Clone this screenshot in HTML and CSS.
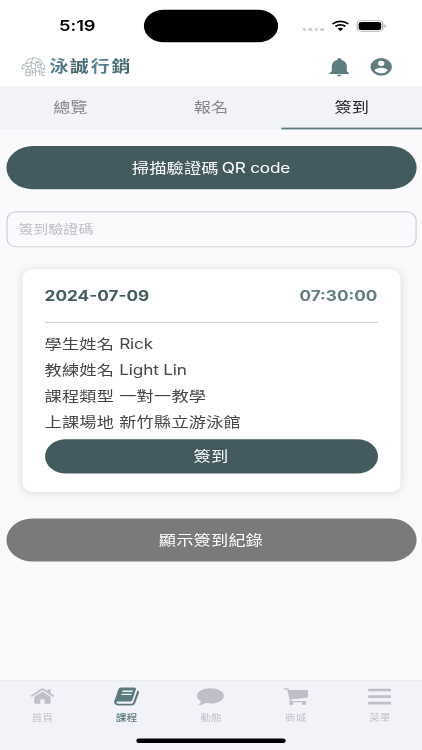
FILE: index.html
```html
<!DOCTYPE html>
<html lang="zh-Hant">
<head>
    <meta charset="UTF-8">
    <meta name="viewport" content="width=device-width, initial-scale=1.0">
    <title>泳誠行銷</title>
    <link rel="stylesheet" href="styles.css">
</head>
<body>
    <div class="phone">
        <div class="status-bar">
            <span class="clock">5:19</span>
            <div class="island"></div>
            <div class="status-icons">
                <div class="dots"><i></i><i></i><i></i><i></i></div>
                <svg class="wifi" viewBox="0 0 17 12">
                    <path d="M8.500 2.500c2.400 0 4.600.9 6.200 2.500l1.300-1.300a10.600 10.600 0 0 0-15 0l1.300 1.300A8.900 8.900 0 0 1 8.500 2.500z"/>
                    <path d="M8.500 6.200c1.400 0 2.700.5 3.700 1.400l1.300-1.300a7.200 7.200 0 0 0-10 0l1.300 1.300c1-.9 2.300-1.400 3.700-1.400z"/>
                    <path d="M8.500 12l2.400-2.500a3.400 3.400 0 0 0-4.800 0z"/>
                </svg>
                <svg class="battery" viewBox="0 0 28 13">
                    <rect x=".5" y=".5" width="24" height="12" rx="3.800" fill="none" stroke="#999"/>
                    <rect x="2" y="2" width="21" height="9" rx="2.500"/>
                    <path d="M26 4.500v4c.8-.3 1.300-1.100 1.300-2s-.5-1.700-1.300-2z" fill="#999"/>
                </svg>
            </div>
        </div>

        <header class="header">
            <div class="brand">
                <svg class="logo" viewBox="0 0 24 22">
                    <path d="M4 13H1.500V9L5 7.500 6.500 3.500 11 1h4l4 2.500 1.500 3.500 2.500 2.500-1 3.500h-3M5 7.500l5-1.500 2-5M6 11l4-1V6l4 2 4-4M3 10h4v3M10 10v3h4V8M14 5l5 2v5h-3v-3l4-1"/>
                    <path d="M5 14v7M5 14h4v3H5M9 17v4H5M11 14v7M11 17h3M14 21V14l2 3 2-3v7M21 14h2M20 14v7h3M20 17h3"/>
                </svg>
                <span class="brand-name">泳誠行銷</span>
            </div>
            <div class="header-icons">
                <svg viewBox="0 0 24 24"><path d="M21 19v1H3v-1l2-2v-6c0-3.100 2.030-5.830 5-6.710V4a2 2 0 0 1 4 0v.290c2.970.880 5 3.610 5 6.710v6l2 2m-7 2a2 2 0 0 1-4 0"/></svg>
                <svg viewBox="0 0 24 24"><path d="M12 19.200c-2.500 0-4.710-1.280-6-3.200.03-2 4-3.100 6-3.100s5.970 1.100 6 3.100a7.230 7.230 0 0 1-6 3.200M12 5a3 3 0 1 1 0 6 3 3 0 0 1 0-6m0-3a10 10 0 1 0 0 20 10 10 0 0 0 0-20z"/></svg>
            </div>
        </header>

        <nav class="tabs">
            <a class="tab">總覽</a>
            <a class="tab">報名</a>
            <a class="tab active">簽到</a>
        </nav>

        <main class="content">
            <button class="btn btn-scan">掃描驗證碼 <span class="latin">QR code</span></button>
            <input class="code-input" type="text" placeholder="簽到驗證碼">

            <section class="card">
                <div class="card-head">
                    <span class="date">2024-07-09</span>
                    <span class="time">07:30:00</span>
                </div>
                <p>學生姓名 <span class="latin">Rick</span></p>
                <p>教練姓名 <span class="latin">Light Lin</span></p>
                <p>課程類型 一對一教學</p>
                <p>上課場地 新竹縣立游泳館</p>
                <button class="btn btn-small">簽到</button>
            </section>

            <button class="btn btn-gray">顯示簽到紀錄</button>
        </main>

        <footer class="bottom-nav">
            <a class="nav-item">
                <svg viewBox="0 0 24 24"><path d="M12 6.300l-8 6.600V20c0 .5.300.8.800.8H10v-5.300h4v5.300h5.200c.5 0 .8-.3.800-.8v-7.100z"/><path d="M23.500 11.500L20 8.600V3.800h-3v2.300l-3.600-3a2.200 2.200 0 0 0-2.800 0L.5 11.500l1.200 1.500L12 4.600 22.300 13z"/></svg>
                <span>首頁</span>
            </a>
            <a class="nav-item active">
                <svg class="book" viewBox="0 0 24 24"><path fill-rule="evenodd" d="M7 2h12c1.300 0 2 .9 1.600 2.200L17.200 16.500c-.3 1-1.100 1.600-2.200 1.600H3.800c-1.200 0-1.500.6-1.300 1.300.2.7.9 1 1.700 1h11.900c1 0 1.600-.4 1.900-1.400L22 5.600c1.300.5 1.800 1.400 1.500 2.500l-3.700 12c-.4 1.400-1.700 2.300-3.300 2.300H4c-2.300 0-3.900-1.700-3.700-4L4.200 4.300C4.600 2.900 5.600 2 7 2zm1.300 3.600l-.5 1.500h9.500l.5-1.500zm-1 3.500l-.5 1.500h9.500l.5-1.500z"/></svg>
                <span>課程</span>
            </a>
            <a class="nav-item">
                <svg class="chat" viewBox="0 0 26 24"><path d="M13 3C6 3 .5 6.800.5 11.600c0 2.400 1.400 4.500 3.600 6-.2 1.700-1 3.200-2.300 4.400 2.700 0 5-.8 6.800-2.300 1.400.4 2.900.5 4.400.5 7 0 12.500-3.800 12.500-8.600S20 3 13 3z"/></svg>
                <span>動態</span>
            </a>
            <a class="nav-item">
                <svg viewBox="0 0 24 24"><path d="M0 2.500h4.300c.4 0 .7.300.8.700L5.300 4.500H24v9L7.200 16l.2 1.600h14.800v1.500H6c-.3-1-.3-1.800 0-2.600L3.600 4.100H0z"/><circle cx="7.700" cy="20.500" r="2"/><circle cx="20" cy="20.500" r="2"/></svg>
                <span>商城</span>
            </a>
            <a class="nav-item">
                <svg viewBox="0 0 24 24"><path d="M1.500 3h21q.6 0 .6.600v2q0 .6-.6.600h-21q-.6 0-.6-.6v-2q0-.6.6-.6zM1.500 10.800h21q.6 0 .6.600v2q0 .6-.6.600h-21q-.6 0-.6-.6v-2q0-.6.6-.6zM1.500 18.600h21q.6 0 .6.600v2q0 .6-.6.600h-21q-.6 0-.6-.6v-2q0-.6.6-.6z"/></svg>
                <span>菜單</span>
            </a>
        </footer>
        <div class="home-indicator"></div>
    </div>
</body>
</html>
```
FILE: styles.css
```css
* {
    box-sizing: border-box;
}

html {
    height: 750px;
    overflow: hidden;
}

body {
    margin: 0;
    width: 422px;
    height: 750px;
    overflow: hidden;
    background: #f2f3f8;
    font-family: Inter, 'Noto Sans CJK TC', sans-serif;
}

/* 393x852 device screen fitted to the window */
.phone {
    position: relative;
    display: flex;
    flex-direction: column;
    width: 393px;
    height: 852px;
    margin-bottom: -102px;
    background: #fafafd;
    transform: scale(1.0738, 0.8802);
    transform-origin: 0 0;
}

.status-bar {
    display: flex;
    align-items: center;
    height: 59px;
    background: #fff;
}

.clock {
    width: 134px;
    padding: 0 0 1px 55px;
    font-size: 17px;
    font-weight: 600;
    letter-spacing: -0.1px;
}

.island {
    width: 125px;
    height: 37px;
    border-radius: 19px;
    background: #000;
}

.status-icons {
    display: flex;
    align-items: center;
    padding: 0 0 1px 22.5px;
}

.dots {
    display: flex;
    gap: 2px;
    margin: 9px 6px 0 0;
}

.dots i {
    width: 3.5px;
    height: 3.5px;
    border-radius: 50%;
    background: #c8c8c8;
}

.wifi {
    width: 18px;
    height: 14px;
    margin-right: 6.5px;
}

.battery {
    width: 28px;
    height: 13px;
}

.header {
    display: flex;
    justify-content: space-between;
    align-items: center;
    height: 39px;
    padding: 0 26px 5px 19px;
    background: #fff;
}

.brand {
    display: flex;
    align-items: center;
}

.logo {
    width: 24px;
    height: 22px;
    fill: none;
    stroke: #8b9aa0;
    stroke-width: 0.7;
}

.brand-name {
    margin-left: 3px;
    font-size: 17.5px;
    font-weight: 700;
    line-height: 24px;
    letter-spacing: 1.8px;
    color: transparent;
    background: linear-gradient(90deg, #558b9b, #3f6068 35%, #578896 55%, #44626b);
    -webkit-background-clip: text;
    background-clip: text;
}

.header-icons {
    display: flex;
    gap: 15px;
}

.header-icons svg {
    width: 24px;
    height: 24px;
    fill: #607d80;
}

.tabs {
    display: flex;
    height: 48.5px;
    background: #f2f3f8;
}

.tab {
    flex: 1;
    line-height: 46px;
    font-size: 16px;
    text-align: center;
    color: #87878a;
}

.tab.active {
    color: #1c1c1e;
    border-bottom: 2px solid #5b7a7d;
}

.content {
    flex: 1;
    display: flex;
    flex-direction: column;
    padding: 19.5px 5.5px 0;
}

.btn {
    flex: none;
    height: 49px;
    padding: 0 0 2px;
    border: none;
    border-radius: 25px;
    background: #435b5e;
    color: #fff;
    font-family: inherit;
    font-size: 16px;
    letter-spacing: 0.2px;
}

.btn-scan {
    word-spacing: -2px;
}

.latin {
    letter-spacing: -0.15px;
    word-spacing: 0;
}

.code-input {
    height: 41px;
    margin: 25px 0 24.5px;
    padding: 0 10.5px 1px;
    border: 1px solid #c7c7cb;
    border-radius: 10px;
    background: #fafafd;
    font-family: inherit;
    font-size: 14px;
}

.code-input::placeholder {
    color: #bcbcc1;
}

.card {
    height: 253px;
    margin: 0 15px;
    padding: 15px 21px 0;
    border-radius: 10px;
    background: #fff;
    box-shadow: 0 1px 10px rgba(0, 0, 0, 0.13);
}

.card-head {
    display: flex;
    justify-content: space-between;
    height: 46px;
    margin-bottom: 10px;
    border-bottom: 1.5px solid #c9c9cb;
    font-size: 16px;
    font-weight: 700;
    line-height: 31px;
}

.date {
    color: #435b5e;
}

.time {
    color: #647d80;
}

.card p {
    margin: 0;
    height: 29.5px;
    line-height: 29.5px;
    font-size: 16px;
    letter-spacing: 0.2px;
    color: #454545;
}

.btn-small {
    width: 100%;
    height: 39.5px;
    margin-top: 4px;
}

.btn-gray {
    margin-top: 30px;
    background: #7b7979;
}

.bottom-nav {
    display: flex;
    height: 79.5px;
    padding-top: 4px;
    border-top: 1px solid #e5e5ea;
    background: #f2f3f8;
}

.nav-item {
    flex: 1;
    display: flex;
    flex-direction: column;
    align-items: center;
    font-size: 10px;
    line-height: 14px;
    color: #c0bfc8;
}

.nav-item svg {
    width: 23px;
    height: 26px;
    margin-bottom: 4px;
    fill: currentColor;
}

.nav-item .chat {
    width: 26px;
}

.nav-item .book {
    width: 24px;
}

.nav-item.active {
    font-weight: 500;
    color: #5b7a7d;
}

.home-indicator {
    position: absolute;
    left: 127px;
    bottom: 8px;
    width: 139px;
    height: 5px;
    border-radius: 3px;
    background: #000;
}
```
